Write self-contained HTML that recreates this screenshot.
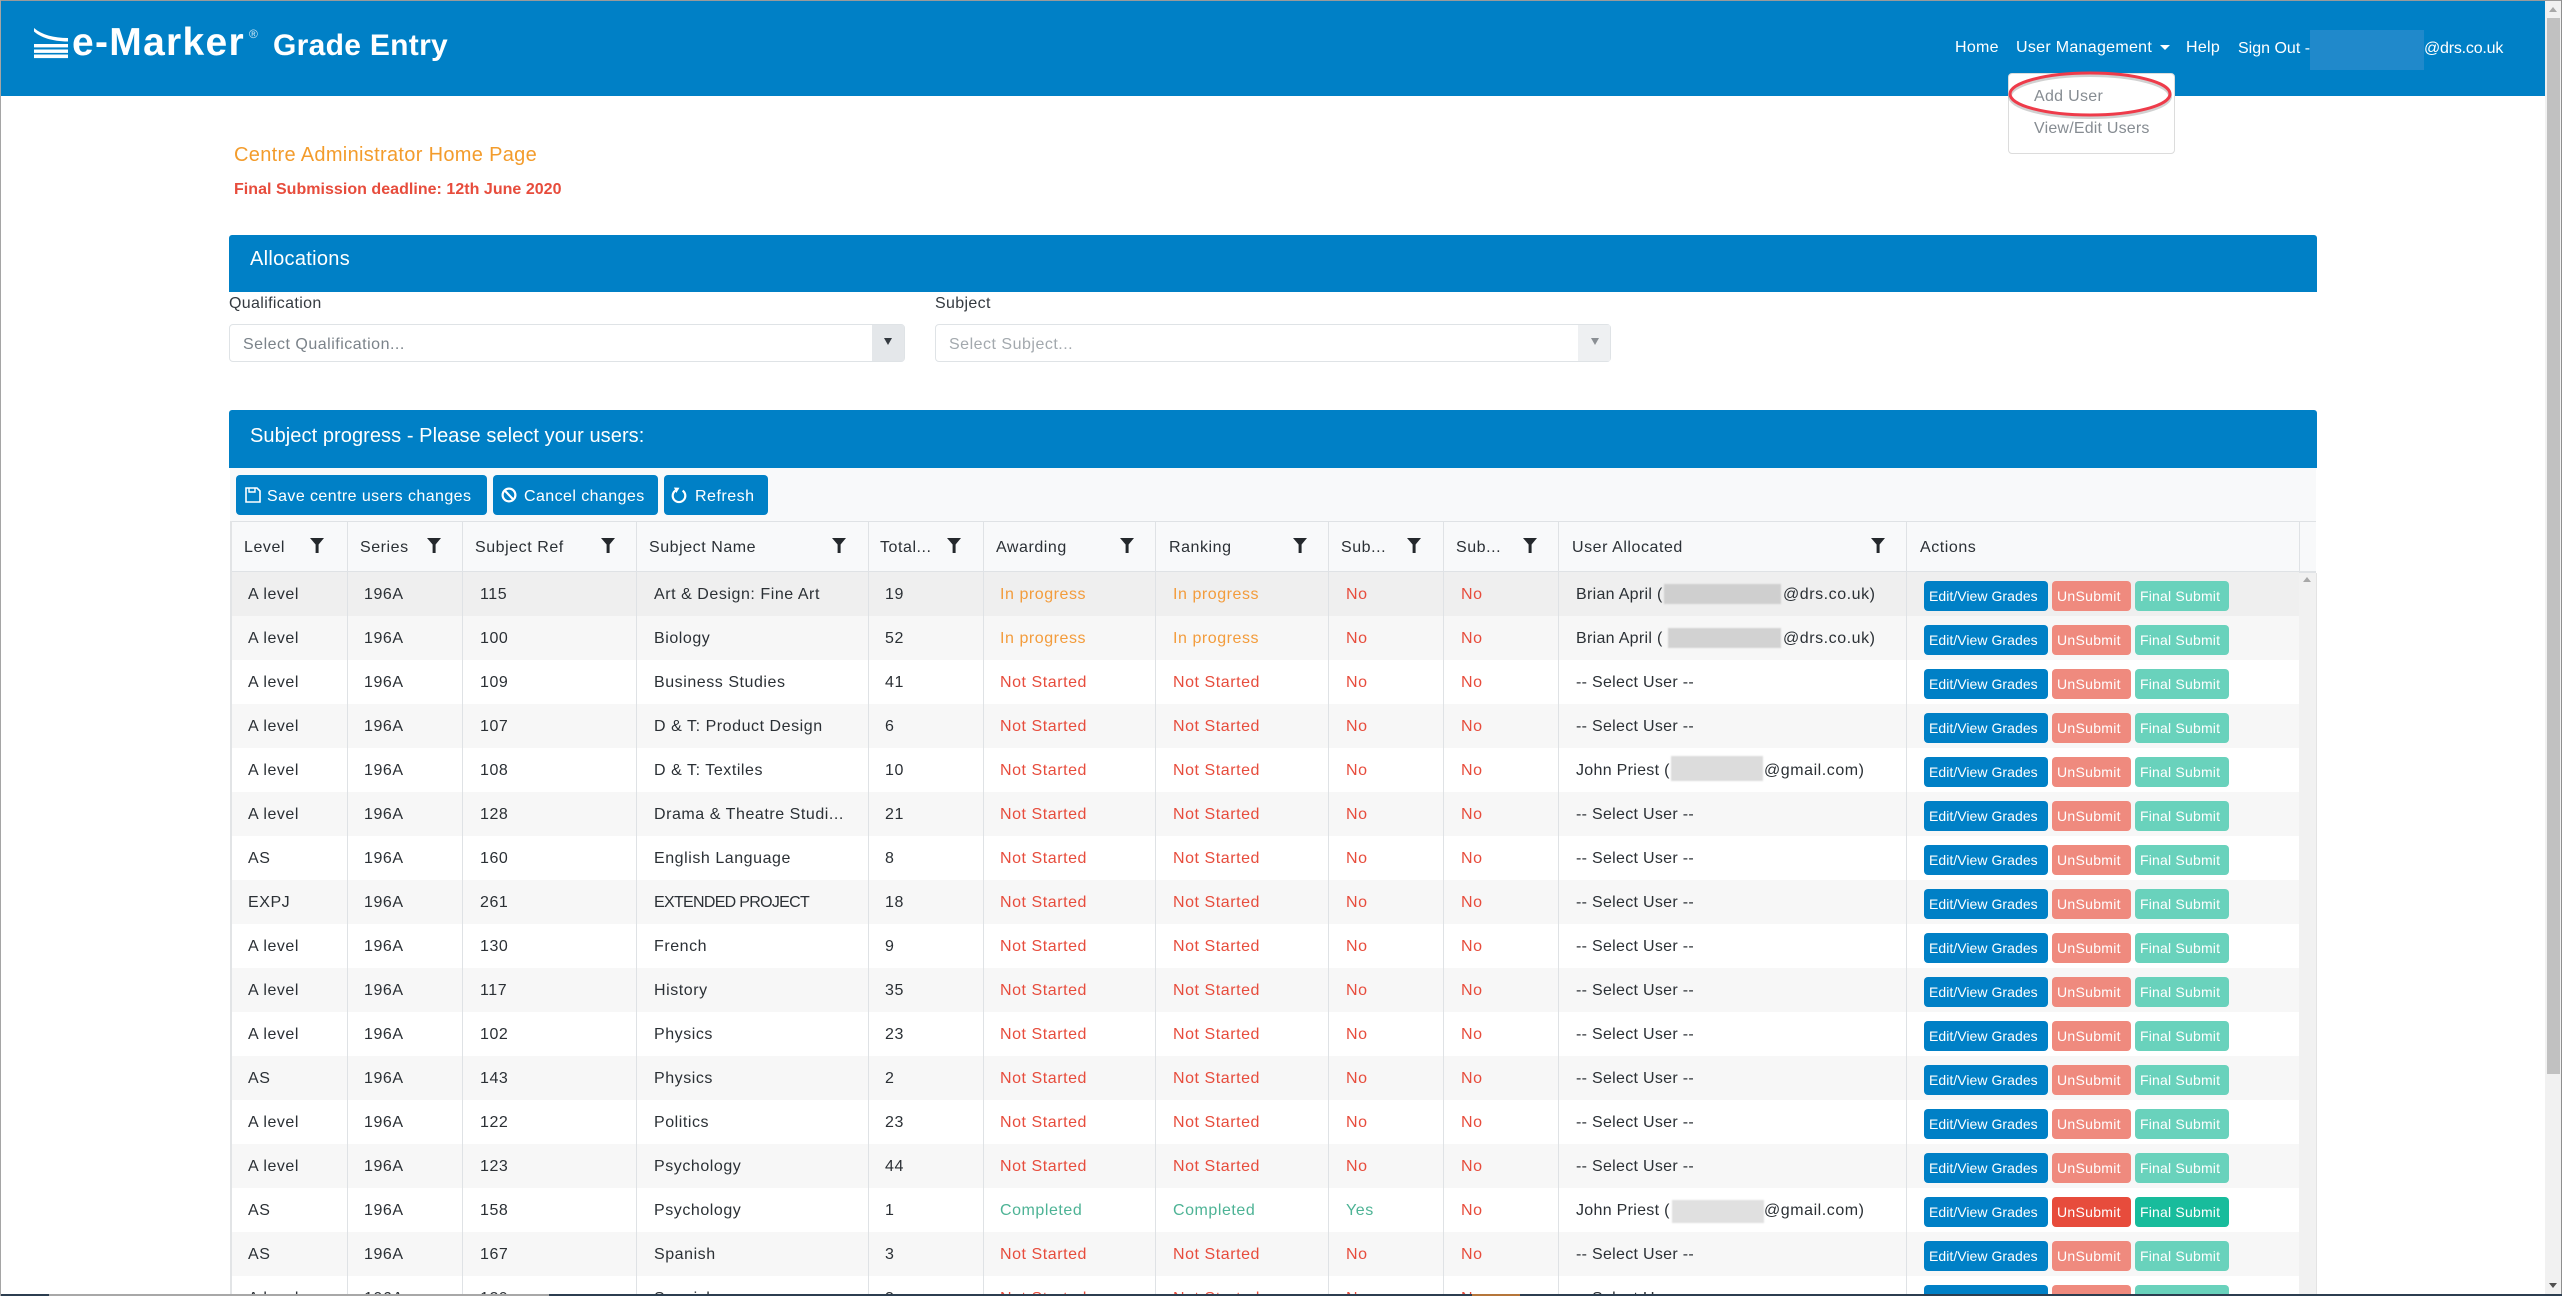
<!DOCTYPE html>
<html lang="en"><head><meta charset="utf-8"><title>e-Marker Grade Entry</title>
<style>
html,body{margin:0;padding:0;background:#fff}
body{position:relative;width:2562px;height:1296px;overflow:hidden;font-family:"Liberation Sans",Arial,sans-serif;font-size:16px;color:#2b3035}
.t,.abs{position:absolute;white-space:nowrap}
.t{line-height:24px}
.blue{position:absolute;background:#0080c6}
.nav{color:#fff;letter-spacing:.3px}
.ph{color:#7b838a;letter-spacing:.5px}
.sel{position:absolute;top:324px;height:36px;width:674px;border:1px solid #dfe3e6;border-radius:4px;background:#fff}
.sel:after{content:"";position:absolute;right:0;top:0;width:32px;height:36px;background:#e4e7ea}
.sel.dis:after{background:#eef0f2}
.arr{position:absolute;top:338px;width:0;height:0;border-left:4px solid transparent;border-right:4px solid transparent;border-top:7px solid #343a40}
.tb{position:absolute;top:475px;height:40px;background:#0080c6;border-radius:4px}
.h{position:absolute;top:536px;color:#2b3035;letter-spacing:.55px;line-height:24px;white-space:nowrap}
.fl{position:absolute;top:538px;width:14px;height:15px}
.ln{position:absolute;top:521px;height:773px;width:1px;background:#dfe2e5}
#rows{position:absolute;left:230px;top:572px;width:2069px;height:722px;overflow:hidden}
.r{position:relative;height:44px;background:#fff;letter-spacing:.55px}
.r:nth-child(even){background:#f7f7f7}
.r:first-child{background:#efefef}
.r span{position:absolute;top:11px;line-height:24px;white-space:nowrap}
.r span:nth-of-type(1){left:18px}
.r span:nth-of-type(2){left:134px}
.r span:nth-of-type(3){left:250px}
.r span:nth-of-type(4){left:424px}
.r span:nth-of-type(5){left:655px}
.r span:nth-of-type(6){left:770px;color:#e74c3c}
.r span:nth-of-type(7){left:943px;color:#e74c3c}
.r span:nth-of-type(8){left:1116px;color:#e74c3c}
.r span:nth-of-type(9){left:1231px;color:#e74c3c}
.r span:nth-of-type(10){left:1346px;letter-spacing:.3px}
.r span.p{color:#f39c3c!important}
.r span.c{color:#4db395!important}
.r span.x{letter-spacing:-.7px}
.r a{position:absolute;top:9px;height:30px;line-height:31px;border-radius:4px;color:#fff;font-size:14px;white-space:nowrap;letter-spacing:.05px;padding-left:5px;box-sizing:border-box}
.r a.e{left:1694px;width:124px;background:#0080c6}
.r a.u{left:1822px;width:79px;background:#ef8a7e;letter-spacing:.3px}
.r a.f{left:1905px;width:94px;background:#69d2bc;letter-spacing:.2px}
.r a.u.on{background:#e74c3c}
.r a.f.on{background:#18bc9c}
.r i{position:absolute;display:block;filter:blur(.8px)}
.r u{position:absolute;top:11px;line-height:24px;text-decoration:none;white-space:nowrap}
</style></head>
<body>
<!-- frame -->
<div class="blue" style="left:0;top:0;width:2545px;height:96px"></div>
<div class="abs" style="left:0;top:0;width:2562px;height:1px;background:#9a9a9a"></div>
<div class="abs" style="left:0;top:0;width:1px;height:1296px;background:#a5a5a5"></div>

<!-- logo -->
<svg class="abs" style="left:34px;top:27px" width="36" height="32" viewBox="0 0 36 32">
<path d="M0 1 C8 8 20 11 34 11 L34 14.5 C18 14.5 6 10 0 4.5Z" fill="#fff"/>
<rect x="0" y="17" width="34" height="3.4" fill="#fff"/><rect x="0" y="22.5" width="34" height="3.4" fill="#fff"/><rect x="0" y="27.5" width="34" height="3.6" fill="#fff"/>
</svg>
<div class="t" style="left:72px;top:20px;line-height:46px;font-size:39px;font-weight:bold;color:#fff;letter-spacing:1.3px">e-Marker</div>
<div class="t" style="left:249px;top:27px;font-size:12px;line-height:14px;color:#cfe6f4">®</div>
<div class="t" style="left:273px;top:29px;line-height:34px;font-size:30px;font-weight:bold;color:#fff;letter-spacing:.3px">Grade Entry</div>

<!-- nav -->
<div class="t nav" style="left:1955px;top:36px">Home</div>
<div class="t nav" style="left:2016px;top:36px">User Management</div>
<div class="abs" style="left:2160px;top:45px;width:0;height:0;border-left:5px solid transparent;border-right:5px solid transparent;border-top:5px solid #fff"></div>
<div class="t nav" style="left:2186px;top:36px">Help</div>
<div class="t nav" style="left:2238px;top:37px;letter-spacing:0">Sign Out -</div>
<div class="abs" style="left:2310px;top:30px;width:114px;height:40px;background:#2089cb"></div>
<div class="t nav" style="left:2424px;top:37px;letter-spacing:-.2px">@drs.co.uk</div>

<!-- dropdown -->
<div class="abs" style="left:2008px;top:73px;width:165px;height:79px;background:#fff;border:1px solid #dcdcdc;border-radius:4px"></div>
<div class="t" style="left:2034px;top:85px;color:#868c92;letter-spacing:.3px">Add User</div>
<div class="t" style="left:2034px;top:117px;color:#868c92;letter-spacing:.2px">View/Edit Users</div>
<svg class="abs" style="left:2000px;top:62px" width="180" height="66" viewBox="0 0 180 66">
<ellipse cx="90" cy="34" rx="80" ry="21" fill="none" stroke="#9a9a9a" stroke-opacity=".45" stroke-width="4"/>
<ellipse cx="90" cy="32" rx="80" ry="21" fill="none" stroke="#ee3b4a" stroke-width="3"/>
</svg>

<!-- headings -->
<div class="t" style="left:234px;top:143px;font-size:20px;color:#f39c2c;letter-spacing:.32px">Centre Administrator Home Page</div>
<div class="t" style="left:234px;top:178px;font-weight:bold;color:#e74c3c;letter-spacing:.03px">Final Submission deadline: 12th June 2020</div>

<!-- allocations -->
<div class="blue" style="left:229px;top:235px;width:2088px;height:57px;border-radius:3px 3px 0 0"></div>
<div class="t" style="left:250px;top:247px;font-size:20px;color:#fff;letter-spacing:.3px">Allocations</div>
<div class="t" style="left:229px;top:292px;letter-spacing:.35px;color:#343a40">Qualification</div>
<div class="t" style="left:935px;top:292px;letter-spacing:.35px;color:#343a40">Subject</div>
<div class="sel" style="left:229px"></div>
<div class="t ph" style="left:243px;top:333px">Select Qualification...</div>
<div class="arr" style="left:884px"></div>
<div class="sel dis" style="left:935px"></div>
<div class="t ph" style="left:949px;top:333px;color:#a3a9ae">Select Subject...</div>
<div class="arr" style="left:1591px;border-top-color:#8a8f94"></div>

<!-- subject progress -->
<div class="blue" style="left:229px;top:410px;width:2088px;height:58px;border-radius:3px 3px 0 0"></div>
<div class="t" style="left:250px;top:424px;font-size:20px;color:#fff;letter-spacing:.07px">Subject progress - Please select your users:</div>
<div class="abs" style="left:230px;top:468px;width:2086px;height:103px;background:#f8f9fa"></div>
<div class="abs" style="left:230px;top:521px;width:2086px;height:1px;background:#dfe2e5"></div>
<div class="abs" style="left:230px;top:571px;width:2086px;height:2px;background:#dfe2e5"></div>

<div class="tb" style="left:236px;width:251px"></div>
<svg class="abs" style="left:244px;top:486px" width="18" height="18" viewBox="0 0 18 18" fill="none" stroke="#fff" stroke-width="1.6"><path d="M2 2H13L16 5V16H2Z"/><path d="M5 2V6H11V2" stroke-width="1.4"/></svg>
<div class="t" style="left:267px;top:485px;color:#fff;letter-spacing:.42px">Save centre users changes</div>
<div class="tb" style="left:493px;width:165px"></div>
<svg class="abs" style="left:500px;top:486px" width="18" height="18" viewBox="0 0 18 18" fill="none" stroke="#fff" stroke-width="2.2"><circle cx="9" cy="9" r="6.4"/><path d="M4.6 4.4L13.4 13.6"/></svg>
<div class="t" style="left:524px;top:485px;color:#fff;letter-spacing:.42px">Cancel changes</div>
<div class="tb" style="left:664px;width:104px"></div>
<svg class="abs" style="left:670px;top:486px" width="18" height="18" viewBox="0 0 18 18" fill="none"><path d="M5.4 4.6A6.3 6.3 0 1 0 12.6 4.6" stroke="#fff" stroke-width="2.2"/><path d="M4 1.5L9.5 1.8L6.3 7Z" fill="#fff"/></svg>
<div class="t" style="left:695px;top:485px;color:#fff;letter-spacing:.5px">Refresh</div>

<!-- table header -->
<div class="h" style="left:244px">Level</div>
<div class="h" style="left:360px">Series</div>
<div class="h" style="left:475px">Subject Ref</div>
<div class="h" style="left:649px">Subject Name</div>
<div class="h" style="left:880px">Total...</div>
<div class="h" style="left:996px">Awarding</div>
<div class="h" style="left:1169px">Ranking</div>
<div class="h" style="left:1341px">Sub...</div>
<div class="h" style="left:1456px">Sub...</div>
<div class="h" style="left:1572px">User Allocated</div>
<div class="h" style="left:1920px">Actions</div>
<svg class="fl" style="left:310px" viewBox="0 0 14 15"><path d="M0 0H14L8.6 6.5V15H5.6V6.5Z" fill="#24282c"/></svg>
<svg class="fl" style="left:427px" viewBox="0 0 14 15"><path d="M0 0H14L8.6 6.5V15H5.6V6.5Z" fill="#24282c"/></svg>
<svg class="fl" style="left:601px" viewBox="0 0 14 15"><path d="M0 0H14L8.6 6.5V15H5.6V6.5Z" fill="#24282c"/></svg>
<svg class="fl" style="left:832px" viewBox="0 0 14 15"><path d="M0 0H14L8.6 6.5V15H5.6V6.5Z" fill="#24282c"/></svg>
<svg class="fl" style="left:947px" viewBox="0 0 14 15"><path d="M0 0H14L8.6 6.5V15H5.6V6.5Z" fill="#24282c"/></svg>
<svg class="fl" style="left:1120px" viewBox="0 0 14 15"><path d="M0 0H14L8.6 6.5V15H5.6V6.5Z" fill="#24282c"/></svg>
<svg class="fl" style="left:1293px" viewBox="0 0 14 15"><path d="M0 0H14L8.6 6.5V15H5.6V6.5Z" fill="#24282c"/></svg>
<svg class="fl" style="left:1407px" viewBox="0 0 14 15"><path d="M0 0H14L8.6 6.5V15H5.6V6.5Z" fill="#24282c"/></svg>
<svg class="fl" style="left:1523px" viewBox="0 0 14 15"><path d="M0 0H14L8.6 6.5V15H5.6V6.5Z" fill="#24282c"/></svg>
<svg class="fl" style="left:1871px" viewBox="0 0 14 15"><path d="M0 0H14L8.6 6.5V15H5.6V6.5Z" fill="#24282c"/></svg>

<!-- rows -->
<div id="rows">
<div class="r"><span>A level</span><span>196A</span><span>115</span><span>Art &amp; Design: Fine Art</span><span>19</span><span class="p">In progress</span><span class="p">In progress</span><span>No</span><span>No</span><span>Brian April (</span><a class="e">Edit/View Grades</a><a class="u">UnSubmit</a><a class="f">Final Submit</a><i style="left:1434px;top:12px;width:117px;height:20px;background:#cfcfcf"></i><u style="left:1553px">@drs.co.uk)</u></div>
<div class="r"><span>A level</span><span>196A</span><span>100</span><span>Biology</span><span>52</span><span class="p">In progress</span><span class="p">In progress</span><span>No</span><span>No</span><span>Brian April (</span><a class="e">Edit/View Grades</a><a class="u">UnSubmit</a><a class="f">Final Submit</a><i style="left:1438px;top:12px;width:113px;height:20px;background:#d2d2d2"></i><u style="left:1553px">@drs.co.uk)</u></div>
<div class="r"><span>A level</span><span>196A</span><span>109</span><span>Business Studies</span><span>41</span><span>Not Started</span><span>Not Started</span><span>No</span><span>No</span><span>-- Select User --</span><a class="e">Edit/View Grades</a><a class="u">UnSubmit</a><a class="f">Final Submit</a></div>
<div class="r"><span>A level</span><span>196A</span><span>107</span><span>D &amp; T: Product Design</span><span>6</span><span>Not Started</span><span>Not Started</span><span>No</span><span>No</span><span>-- Select User --</span><a class="e">Edit/View Grades</a><a class="u">UnSubmit</a><a class="f">Final Submit</a></div>
<div class="r"><span>A level</span><span>196A</span><span>108</span><span>D &amp; T: Textiles</span><span>10</span><span>Not Started</span><span>Not Started</span><span>No</span><span>No</span><span>John Priest (</span><a class="e">Edit/View Grades</a><a class="u">UnSubmit</a><a class="f">Final Submit</a><i style="left:1441px;top:8px;width:92px;height:25px;background:#dcdcdc"></i><u style="left:1534px">@gmail.com)</u></div>
<div class="r"><span>A level</span><span>196A</span><span>128</span><span>Drama &amp; Theatre Studi...</span><span>21</span><span>Not Started</span><span>Not Started</span><span>No</span><span>No</span><span>-- Select User --</span><a class="e">Edit/View Grades</a><a class="u">UnSubmit</a><a class="f">Final Submit</a></div>
<div class="r"><span>AS</span><span>196A</span><span>160</span><span>English Language</span><span>8</span><span>Not Started</span><span>Not Started</span><span>No</span><span>No</span><span>-- Select User --</span><a class="e">Edit/View Grades</a><a class="u">UnSubmit</a><a class="f">Final Submit</a></div>
<div class="r"><span>EXPJ</span><span>196A</span><span>261</span><span class="x">EXTENDED PROJECT</span><span>18</span><span>Not Started</span><span>Not Started</span><span>No</span><span>No</span><span>-- Select User --</span><a class="e">Edit/View Grades</a><a class="u">UnSubmit</a><a class="f">Final Submit</a></div>
<div class="r"><span>A level</span><span>196A</span><span>130</span><span>French</span><span>9</span><span>Not Started</span><span>Not Started</span><span>No</span><span>No</span><span>-- Select User --</span><a class="e">Edit/View Grades</a><a class="u">UnSubmit</a><a class="f">Final Submit</a></div>
<div class="r"><span>A level</span><span>196A</span><span>117</span><span>History</span><span>35</span><span>Not Started</span><span>Not Started</span><span>No</span><span>No</span><span>-- Select User --</span><a class="e">Edit/View Grades</a><a class="u">UnSubmit</a><a class="f">Final Submit</a></div>
<div class="r"><span>A level</span><span>196A</span><span>102</span><span>Physics</span><span>23</span><span>Not Started</span><span>Not Started</span><span>No</span><span>No</span><span>-- Select User --</span><a class="e">Edit/View Grades</a><a class="u">UnSubmit</a><a class="f">Final Submit</a></div>
<div class="r"><span>AS</span><span>196A</span><span>143</span><span>Physics</span><span>2</span><span>Not Started</span><span>Not Started</span><span>No</span><span>No</span><span>-- Select User --</span><a class="e">Edit/View Grades</a><a class="u">UnSubmit</a><a class="f">Final Submit</a></div>
<div class="r"><span>A level</span><span>196A</span><span>122</span><span>Politics</span><span>23</span><span>Not Started</span><span>Not Started</span><span>No</span><span>No</span><span>-- Select User --</span><a class="e">Edit/View Grades</a><a class="u">UnSubmit</a><a class="f">Final Submit</a></div>
<div class="r"><span>A level</span><span>196A</span><span>123</span><span>Psychology</span><span>44</span><span>Not Started</span><span>Not Started</span><span>No</span><span>No</span><span>-- Select User --</span><a class="e">Edit/View Grades</a><a class="u">UnSubmit</a><a class="f">Final Submit</a></div>
<div class="r"><span>AS</span><span>196A</span><span>158</span><span>Psychology</span><span>1</span><span class="c">Completed</span><span class="c">Completed</span><span class="c">Yes</span><span>No</span><span>John Priest (</span><a class="e">Edit/View Grades</a><a class="u on">UnSubmit</a><a class="f on">Final Submit</a><i style="left:1442px;top:12px;width:92px;height:23px;background:#e0e0e0"></i><u style="left:1534px">@gmail.com)</u></div>
<div class="r"><span>AS</span><span>196A</span><span>167</span><span>Spanish</span><span>3</span><span>Not Started</span><span>Not Started</span><span>No</span><span>No</span><span>-- Select User --</span><a class="e">Edit/View Grades</a><a class="u">UnSubmit</a><a class="f">Final Submit</a></div>
<div class="r"><span>A level</span><span>196A</span><span>129</span><span>Spanish</span><span>3</span><span>Not Started</span><span>Not Started</span><span>No</span><span>No</span><span>-- Select User --</span><a class="e">Edit/View Grades</a><a class="u">UnSubmit</a><a class="f">Final Submit</a></div>
</div>

<!-- column lines -->
<div class="abs" style="left:230px;top:521px;width:2px;height:773px;background:#e2e4e6"></div>
<div class="ln" style="left:347px"></div><div class="ln" style="left:462px"></div><div class="ln" style="left:636px"></div><div class="ln" style="left:868px"></div><div class="ln" style="left:983px"></div><div class="ln" style="left:1155px"></div><div class="ln" style="left:1328px"></div><div class="ln" style="left:1443px"></div><div class="ln" style="left:1558px"></div><div class="ln" style="left:1906px"></div>
<div class="abs" style="left:2299px;top:521px;width:1px;height:51px;background:#dfe2e5"></div>

<!-- inner scrollbar -->
<div class="abs" style="left:2299px;top:573px;width:17px;height:721px;background:#f1f1f1;border-right:1px solid #e3e3e3"></div>
<div class="abs" style="left:2303px;top:577px;width:0;height:0;border-left:4px solid transparent;border-right:4px solid transparent;border-bottom:5px solid #a8a8a8"></div>

<!-- outer scrollbar -->
<div class="abs" style="left:2545px;top:1px;width:16px;height:1295px;background:#f1f1f1"></div>
<div class="abs" style="left:2561px;top:0;width:1px;height:1296px;background:#8e8e8e"></div>
<div class="abs" style="left:2547px;top:18px;width:13px;height:1056px;background:#c1c1c1"></div>
<div class="abs" style="left:2549px;top:7px;width:0;height:0;border-left:4px solid transparent;border-right:4px solid transparent;border-bottom:5px solid #a8a8a8"></div>
<div class="abs" style="left:2549px;top:1283px;width:0;height:0;border-left:4px solid transparent;border-right:4px solid transparent;border-top:5px solid #505050"></div>

<!-- bottom edge -->
<div class="abs" style="left:1px;top:1294px;width:2561px;height:2px;background:#2c3e50"></div>
<div class="abs" style="left:49px;top:1294px;width:500px;height:2px;background:#a8a8a8"></div>
<div class="abs" style="left:1472px;top:1294px;width:48px;height:2px;background:#b5763a"></div>
</body></html>
